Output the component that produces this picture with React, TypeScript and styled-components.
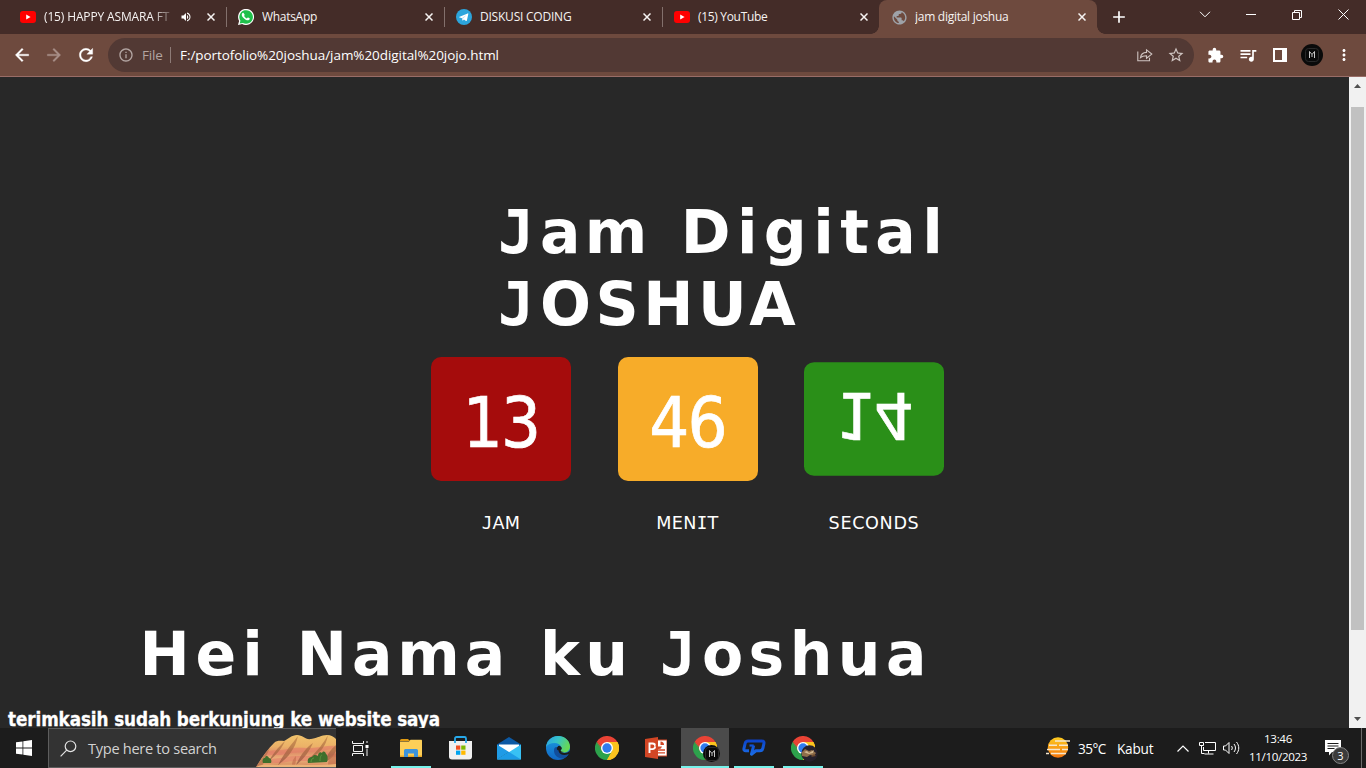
import React from 'react';
import styled, { createGlobalStyle, css } from 'styled-components';
import {
  MdArrowBack, MdArrowForward, MdRefresh, MdExtension, MdQueueMusic,
  MdAdd, MdMoreVert, MdStarBorder, MdInfoOutline, MdPublic, MdVolumeUp,
} from 'react-icons/md';

const Global = createGlobalStyle`
  * { box-sizing: border-box; }
  body { margin: 0; background: #282828; overflow: hidden; }
  svg { display: block; flex: none; }
`;

const ui = css`font-family: "Open Sans", "Noto Sans", sans-serif;`;
const verdana = css`font-family: "DejaVu Sans", sans-serif;`;
const condensed = css`font-family: "DejaVu Sans Condensed", "DejaVu Sans", sans-serif; font-stretch: condensed;`;

const Screen = styled.div`
  width: 1366px; height: 768px; display: flex; flex-direction: column;
  overflow: hidden; color: #fff; ${ui}
`;

/* ---------- tab strip ---------- */
const TabStrip = styled.div`
  height: 34px; flex: none; background: #442c28; display: flex; padding-left: 8px;
`;
const Tab = styled.div<{ $w?: number; $line?: boolean }>`
  width: ${p => p.$w ?? 218}px; height: 34px; display: flex; align-items: center;
  padding: 0 11px 0 12px; position: relative;
  &::after {
    content: ''; display: ${p => (p.$line ? 'block' : 'none')};
    position: absolute; right: -1px; top: 7px; width: 1px; height: 20px; background: #83706c;
  }
`;
const ActiveTab = styled(Tab)`
  background: #6e4a3e; border-radius: 8px 8px 0 0;
  &::before, &::after {
    content: ''; display: block; position: absolute; width: 8px; height: 8px; bottom: 0; top: auto;
  }
  &::before { left: -8px; background: radial-gradient(circle at 0 0, transparent 7.5px, #6e4a3e 8px); }
  &::after { right: -8px; background: radial-gradient(circle at 100% 0, transparent 7.5px, #6e4a3e 8px); }
`;
const Favicon = styled.span`width: 16px; height: 16px; flex: none; display: flex; align-items: center; justify-content: center;`;
const TabTitle = styled.span<{ $ls?: number; $fade?: boolean }>`
  margin-left: 8px; flex: 1; font-size: 12px; line-height: 18px; white-space: nowrap; overflow: hidden;
  letter-spacing: ${p => p.$ls ?? 0}px; color: #f6f3f2;
  ${p => p.$fade && css`
    flex: 0 0 127px;
    mask-image: linear-gradient(90deg, #000 108px, transparent 132px);
  `}
`;
const CloseBox = styled.span`margin-left: auto;`;
const Speaker = styled(MdVolumeUp)`margin-left: 9px;`;
const NewTab = styled.div`width: 44px; display: flex; align-items: center; justify-content: center;`;
const WindowControls = styled.div`
  margin-left: auto; display: flex; height: 29px;
  span { width: 46px; display: flex; align-items: center; justify-content: center; }
`;

/* ---------- toolbar ---------- */
const Toolbar = styled.div`
  height: 43px; flex: none; background: #6e4a3e; border-bottom: 1px solid #996d67;
  display: flex; align-items: center; padding: 0 12px; font-size: 13.5px;
`;
const NavButtons = styled.div`
  display: flex; gap: 12px; width: 96px;
  svg { stroke: currentColor; stroke-width: .4; }
  svg path[fill="none"] { stroke: none; }
  svg:nth-child(2) { color: #a88f88; }
`;
const AddressBar = styled.div`
  width: 1086px; height: 34px; margin-top: -1px; border-radius: 17px; background: #523934;
  display: flex; align-items: center; padding: 0 9px 0 10px; line-height: 18px;
`;
const Scheme = styled.span`margin-left: 8px; color: #b3a5a2; width: 28px; letter-spacing: -0.2px;`;
const Divider = styled.span`width: 1px; height: 16px; background: #8d7b77; margin-right: 9px;`;
const Url = styled.span`letter-spacing: -0.06px;`;
const BarActions = styled.div`margin-left: auto; display: flex; align-items: center; gap: 14px; color: #cfc4c1;`;
const ToolActions = styled.div`display: flex; align-items: center; margin-left: 13px;`;
const Slot = styled.span<{ $w: number }>`width: ${p => p.$w}px; display: flex; align-items: center; justify-content: flex-start;`;
const Avatar = styled.span<{ $size?: number }>`
  width: ${p => p.$size ?? 22}px; height: ${p => p.$size ?? 22}px; border-radius: 50%; background: #0a0a0a;
  display: flex; align-items: center; justify-content: center;
`;

/* ---------- page ---------- */
const Viewport = styled.div`height: 651px; flex: none; display: flex; background: #282828;`;
const Page = styled.main`flex: 1; overflow: hidden; padding-top: 119px; ${verdana}`;
const Heading = styled.h1<{ $left: number; $top?: number }>`
  margin: ${p => p.$top ?? 0}px 0 0 ${p => p.$left}px; font-size: 60px; line-height: 72px;
  font-weight: 700; white-space: nowrap;
`;
const Line = styled.div`display: flex; height: 72px;`;
const Word = styled.span<{ $ls: number; $w: number }>`width: ${p => p.$w}px; flex: none; letter-spacing: ${p => p.$ls}px;`;
const Initial = styled.span`width: 42px; flex: none; font-family: "DejaVu Sans Mono", monospace;`;
const Clock = styled.div`display: flex; gap: 46.5px; margin: 17px 0 0 431px;`;
const Unit = styled.div`width: 140px;`;
const Card = styled.div<{ $bg: string; $flip?: boolean }>`
  height: 124px; border-radius: 10px; background: ${p => p.$bg}; text-align: center;
  padding-top: 4px; line-height: 124px; font-size: 70px; letter-spacing: -1.9px; ${condensed}
  -webkit-text-stroke: .7px #fff;
  ${p => p.$flip && css`transform: scaleY(-0.915);`}
`;
const Caption = styled.div<{ $ls: number }>`
  margin-top: 30px; text-align: center; font-size: 17.6px; line-height: 24px; height: 24px; letter-spacing: ${p => p.$ls}px;
  b { font: 400 17.6px/24px "DejaVu Sans Mono", monospace; }
`;
const Thanks = styled.h3`
  margin: 18px 0 0 8px; font-size: 18.7px; line-height: 24px; font-weight: 700; letter-spacing: -0.09px; white-space: nowrap;
  ${condensed} -webkit-text-stroke: .3px #fff;
`;
const Scrollbar = styled.div`
  width: 17px; background: #f1f1f1; display: flex; flex-direction: column; align-items: center; justify-content: space-between; padding: 7px 0;
`;
const Thumb = styled.div`width: 13px; height: 523px; background: #c1c1c1; margin-bottom: 69px;`;

/* ---------- taskbar ---------- */
const Taskbar = styled.div`height: 40px; flex: none; background: #1c1c1c; display: flex;`;
const Cell = styled.div<{ $active?: boolean; $run?: boolean }>`
  width: 48px; margin-right: 1px; display: flex; align-items: center; justify-content: center;
  background: ${p => (p.$active ? '#4b4b4b' : 'transparent')}; position: relative;
  &::after {
    content: ''; display: ${p => (p.$run || p.$active ? 'block' : 'none')}; position: absolute; bottom: 0;
    left: ${p => (p.$active ? 0 : 4)}px; right: ${p => (p.$active ? 0 : 4)}px; height: 2px; background: #76f2ea;
  }
`;
const Start = styled(Cell)`margin: 0;`;
const TaskView = styled(Cell)`margin-right: 3px;`;
const Search = styled.div`
  width: 288px; background: #333; border: 1px solid #5d5d5d; border-right: 0; display: flex;
  align-items: center; padding-left: 11px; font-size: 14.6px; letter-spacing: -0.3px; color: #d2d2d2; overflow: hidden;
`;
const SearchText = styled.span`margin-left: 11px; margin-right: auto; white-space: nowrap;`;
const Tray = styled.div`margin-left: auto; display: flex; align-items: center; font-size: 13.6px;`;
const Temp = styled.span`margin-left: 8px; width: 39px; letter-spacing: -0.5px;`;
const Weather = styled.span`width: 60px; letter-spacing: -0.2px;`;
const TrayIcon = styled.span<{ $gap: number }>`margin-left: ${p => p.$gap}px;`;
const DateTime = styled.div`
  width: 66px; margin-left: 5px; text-align: center; font-size: 11.6px; line-height: 18px; letter-spacing: -0.35px;
  white-space: nowrap; padding-bottom: 1px;
`;
const Notice = styled.div`width: 31px; height: 40px; position: relative; margin-left: 14px; padding-top: 12px;`;
const Badge = styled.span`
  position: absolute; left: 7px; top: 19px; width: 17px; height: 17px; border-radius: 50%; background: #3b3b3b;
  border: 1px solid #858585; font-size: 11px; line-height: 15px; text-align: center;
`;
const ShowDesktop = styled.div`width: 5px; height: 40px; border-left: 1px solid #6b6b6b; margin-left: 5px;`;

const YouTube = () => (
  <svg width="16" height="12" viewBox="0 0 16 12"><rect width="16" height="12" rx="3" fill="#f00" /><path d="M6.2 3.5v5L10.6 6z" fill="#fff" /></svg>
);
const WhatsApp = () => (
  <svg width="16" height="16" viewBox="0 0 16 16">
    <path d="M0 16l1.1-4.1A8 8 0 1 1 4.1 14.9z" fill="#fff" />
    <path d="M1.7 14.4l.7-2.7A6.8 6.8 0 1 1 4.9 14z" fill="#1fc04b" />
    <path d="M5.6 4.1c-.3-.6-1-.5-1.4.1-1.100 1.500-.1 3.300 1.400 4.800s3.300 2.600 4.700 2.300c1-.2 1.600-1 1.500-1.700-.1-.4-1.700-1.200-2-1.100-.4.2-.7 1-1 .9-1-.3-2.200-1.400-2.600-2.300-.2-.4.6-.8.5-1.300z" fill="#fff" />
  </svg>
);
const Telegram = () => (
  <svg width="16" height="16" viewBox="0 0 16 16"><circle cx="8" cy="8" r="8" fill="#2ca5dc" />
    <path d="M3 7.900l8.700-3.500c.5-.2.7.1.6.6l-1.400 6.600c-.1.500-.5.600-.9.300L7.900 10.400l-1 1c-.2.2-.5.1-.5-.2l-.4-2-2.900-.9z" fill="#fff" />
    <path d="M6 9.100l4.500-3-3.600 3.600-.4 1.500z" fill="#b8dcf0" /></svg>
);
const Monogram = () => (
  <svg width="22" height="22" viewBox="0 0 22 22" fill="none">
    <rect x="4.500" y="4.500" width="13" height="13" rx="3" stroke="#2a2a2a" />
    <path d="M8.500 14V7.500l2.500 3 2.500-3V14M11 10.500V13" stroke="#c8c8c8" strokeWidth="1" />
  </svg>
);
const Share = () => (
  <svg width="16" height="16" viewBox="0 0 16 16" fill="none" stroke="currentColor" strokeWidth="1.100">
    <path d="M.8 4.500v9.300h11.700v-3" /><path d="M3.500 10.500c.5-3.600 2.800-5 6-5.100V2.800l5.300 4.300-5.300 4.200V8.700c-2.500 0-4.500.4-6 1.800z" />
  </svg>
);
const SidePanel = () => (<svg width="14" height="14" viewBox="0 0 14 14"><path d="M0 0h14v14H0zM2 2v10h7V2z" fill="#fff" fillRule="evenodd" /></svg>);

const Chrome = () => (
  <svg width="24" height="24" viewBox="0 0 48 48">
    <path d="M24 24L3.200 12A24 24 0 0 1 44.800 12z" fill="#e94335" />
    <path d="M24 24L44.800 12A24 24 0 0 1 24 48z" fill="#fcc31e" />
    <path d="M24 24L24 48A24 24 0 0 1 3.200 12z" fill="#2da24c" />
    <path d="M24 12h20.800L34 20zM13.600 30L3.200 12l15 6z" fill="#e94335" />
    <path d="M13.600 30L3.200 12l10.400 12z" fill="#2da24c" />
    <path d="M34.400 30L24 48l-1-14z" fill="#2da24c" />
    <path d="M34.400 30L24 48A24 24 0 0 0 44.800 12H24z" fill="#fcc31e" />
    <circle cx="24" cy="24" r="12" fill="#fff" /><circle cx="24" cy="24" r="9.300" fill="#2f7bee" />
  </svg>
);
const Overlay = styled.span`position: absolute; left: 22px; top: 17px;`;

const Explorer = () => (
  <svg width="22" height="19" viewBox="0 0 22 19"><path d="M0 1.500A1.500 1.500 0 0 1 1.500 0H8l2 2H0z" fill="#e19b12" /><path d="M0 2.500h9l1.500-1.800H21c.6 0 1 .4 1 1V17H0z" fill="#fdcf58" />
    <path d="M0 16.500h22V18H0z" fill="#e8a827" /><path d="M4 18v-6.500A1.500 1.500 0 0 1 5.500 10h11a1.500 1.500 0 0 1 1.500 1.500V18h-4v-3.500H8V18z" fill="#3c94dc" /></svg>
);
const Store = () => (
  <svg width="23" height="24" viewBox="0 0 23 24">
    <path d="M0 5h23v15.500a3 3 0 0 1-3 3H3a3 3 0 0 1-3-3z" fill="#f0f0f0" /><path d="M6 7V2.500A1.500 1.500 0 0 1 7.500 1h8A1.500 1.500 0 0 1 17 2.500V7" fill="none" stroke="#27a9ea" strokeWidth="1.800" />
    <path d="M7 9.500h4.300v4.200H7z" fill="#f25022" /><path d="M12.200 9.500h4.300v4.200h-4.300z" fill="#7fba00" /><path d="M7 14.600h4.300v4.200H7z" fill="#00a4ef" /><path d="M12.200 14.600h4.300v4.200h-4.300z" fill="#ffb900" /></svg>
);
const Mail = () => (
  <svg width="24" height="23" viewBox="0 0 24 23"><path d="M0 7.500L12 0l12 7.500V14H0z" fill="#0c59a4" /><path d="M2 7.500h20V15H2z" fill="#fff" />
    <path d="M0 7.500l12 7.500L0 22.500z" fill="#1f9be6" /><path d="M24 7.500L0 22.500h24z" fill="#38c1f4" /><path d="M0 22.500L12 15l12 7.500z" fill="#1d9be6" /></svg>
);
const Edge = () => (
  <svg width="24" height="24" viewBox="0 0 24 24">
    <defs>
      <linearGradient id="eg" x1="0" x2="1" y1="0" y2=".4"><stop offset="0" stopColor="#2a9fe8" /><stop offset=".5" stopColor="#36c3c9" /><stop offset="1" stopColor="#65d857" /></linearGradient>
      <linearGradient id="eb" x1="0" x2="0" y1="0" y2="1"><stop offset="0" stopColor="#1b9de2" /><stop offset="1" stopColor="#1166c4" /></linearGradient>
    </defs>
    <circle cx="12" cy="12" r="12" fill="url(#eb)" />
    <path d="M0 11C1 4 6 0 12 0c7 0 12 5 12 10.500 0 4-3 6-6 6-2.500 0-4-1-3.500-2 1-1 1-2 .8-3C14.500 8.500 12 7 8.500 7 5 7 1.500 8.500 0 11z" fill="url(#eg)" />
    <path d="M8.500 12c-2 5 2 11 9 10.500 2-.8 4-2.500 5.300-4.500-5 2-10 0-10.300-4 0-1.500 1-2 1-2-2-1.500-4.200-1.200-5 0z" fill="#124e9b" />
    <path d="M24 14.500c-2 2.500-6 3-8.500 2-1.500-.6-1.300-1.500-.8-2.200-.8.500-2 .8-2.200.2.500 4 5 6 10.500 3.500z" fill="#1c1c1c" />
    <path d="M12.500 14.500a2.300 2.300 0 1 1 2.300-.4c-.8.800.4 2 3.200 2-2.500 1-5 .4-5.500-1.600z" fill="#1c1c1c" />
  </svg>
);
const PowerPoint = () => (
  <svg width="22" height="22" viewBox="0 0 22 22"><path d="M12 3h10v16H12z" fill="#fff" stroke="#d24625" /><path d="M0 2L13 0v22L0 20z" fill="#d24625" />
    <path d="M4.500 16V6.500h3a2.600 2.600 0 0 1 0 5.600h-3" fill="none" stroke="#fff" strokeWidth="1.900" /><path d="M13 13h7M13 15.800h7" stroke="#d24625" strokeWidth="1.300" /><path d="M13 5.500a3.300 3.300 0 1 0 4 4h-4z" fill="#d24625" /><path d="M15.500 4.500v3.500H19A3.500 3.500 0 0 0 15.500 4.500z" fill="#d24625" /></svg>
);
const BlueP = () => (
  <svg width="24" height="18" viewBox="0 0 24 18" fill="none" stroke="url(#bp)" strokeWidth="3" strokeLinejoin="round">
    <defs><linearGradient id="bp" gradientUnits="userSpaceOnUse" x1="0" x2="0" y1="0" y2="17"><stop offset="0" stopColor="#0b3fc4" /><stop offset="1" stopColor="#1b70ea" /></linearGradient></defs>
    <path d="M7 11.800H3.800C2.300 11.800 1.600 11 2 9.300L3.100 4.500C3.500 2.800 4.500 2 6.100 2H19.900c1.700 0 2.400 1 2 2.700l-1 4.500c-.4 1.700-1.400 2.600-3 2.600h-4L9.500 15.200l2.200-8.700" />
    <path d="M7.500 6.500h4.200" strokeWidth="2.200" /></svg>
);
const PhotoBadge = () => (
  <svg width="17" height="17" viewBox="0 0 17 17"><circle cx="8.500" cy="8.500" r="8.200" fill="#26202c" /><path d="M1 7l3-3 4 2 3-1 4 3-2 3-4-1-3 2-5-1z" fill="#8f6d4a" /><path d="M3 7l3-1 2 2 5-3-1 3-4 1-3-1z" fill="#d2b78f" /><path d="M10 12l3-3 2 2z" fill="#6c492d" /></svg>
);
const Hills = () => (
  <svg width="80" height="32" viewBox="0 0 80 32">
    <defs>
      <linearGradient id="hill" x1="0" x2="0" y1="0" y2="1"><stop offset="0" stopColor="#f0c36c" /><stop offset=".35" stopColor="#ecb268" /><stop offset=".55" stopColor="#e08f68" /><stop offset=".75" stopColor="#edb37a" /><stop offset="1" stopColor="#d3855c" /></linearGradient>
      <linearGradient id="fold" x1="0" x2="0" y1="0" y2="1"><stop offset="0" stopColor="#c08246" /><stop offset="1" stopColor="#8f4e3c" /></linearGradient>
      <clipPath id="ridge"><path d="M0 32C6 22 12 14 18 8c3-3 7-2 10-2 4-2 8-6 13-6 6 0 8 5 14 4 7-1 10-4 16-4 4 0 7 2 9 4v28z" /></clipPath>
    </defs>
    <g clipPath="url(#ridge)">
      <path d="M0 0h80v32H0z" fill="url(#hill)" />
      <path d="M10 17c8-3 14-1 22-3s16-1 24-1 16-3 24-2v3c-9 0-15 3-24 3s-17 0-25 2-14 0-23 2zM6 25c10-2 16-1 24-3s22 0 30-2 14-2 20-1v3c-8-1-14 1-22 3s-20 0-28 2-16 0-26 1z" fill="#e27c69" opacity=".6" />
      <path d="M29 6c-5 5-10 9-16 20 6-5 12-11 16-20zM42 1c-6 8-12 14-20 29 10-7 17-16 20-29zM57 8c-7 5-12 11-17 22 8-6 13-13 17-22zM72 0c-5 9-10 15-18 23 10-4 16-12 18-23zM80 10c-6 5-9 10-11 17 5-2 9-6 11-11z" fill="url(#fold)" opacity=".7" />
      <path d="M0 32C5 24 9 18 14 13c-3 6-5 11-8 19z" fill="#b3704a" opacity=".7" />
      <path d="M36 30c0-4 2-7 4-9 0 4 0 6-1 9zM72 30c0-6 3-9 8-12v12z" fill="#c4704f" opacity=".7" />
      <path d="M0 32c8-4 14-2 20-2 15-1 40 1 60-1v3z" fill="#edb477" />
      <path d="M7 28c-1-3 0-5 2-5 1-3 3-2 4 0 2 0 3 3 2 5zM52 28c-1-4 1-6 4-6 2-3 4-2 6-1 0-3 2-5 4-3 1-2 3-2 4 1 2 1 2 6 1 8z" fill="#3f6f2c" />
      <path d="M55 27c0-3 2-4 3-4M64 26c0-4 1-6 2-6" stroke="#5f9440" fill="none" />
    </g>
  </svg>
);
const Haze = () => (
  <svg width="24" height="22" viewBox="0 0 24 22"><defs><linearGradient id="sun" x1="0" x2="0" y1="0" y2="1"><stop offset="0" stopColor="#fdcb20" /><stop offset="1" stopColor="#f4740b" /></linearGradient></defs>
    <circle cx="12" cy="10.500" r="10.200" fill="url(#sun)" /><path d="M9 4h15M3 8.200h8M13 8.200h9M1 12.400h13M16 12.400h6M0 16.600h3M5 16.600h15" stroke="#f5e7cf" strokeWidth="1.500" /></svg>
);

const Close = () => (
  <CloseBox><svg width="8" height="8" viewBox="0 0 8 8" fill="none" stroke="#f6f3f2" strokeWidth="1.500"><path d="M.5.5l7 7M7.500.5l-7 7" /></svg></CloseBox>
);

export default function App() {
  return (
    <Screen>
      <Global />
      <TabStrip>
        <Tab $line><Favicon><YouTube /></Favicon><TabTitle $fade $ls={-0.14}>(15) HAPPY ASMARA FT</TabTitle>
          <Speaker size={12} /><Close /></Tab>
        <Tab $line><Favicon><WhatsApp /></Favicon><TabTitle $ls={-0.3}>WhatsApp</TabTitle><Close /></Tab>
        <Tab $line><Favicon><Telegram /></Favicon><TabTitle $ls={-0.22}>DISKUSI CODING</TabTitle><Close /></Tab>
        <Tab $w={217}><Favicon><YouTube /></Favicon><TabTitle $ls={-0.32}>(15) YouTube</TabTitle><Close /></Tab>
        <ActiveTab><Favicon><MdPublic size={17} color="#9ea2a8" /></Favicon><TabTitle $ls={-0.27}>jam digital joshua</TabTitle><Close /></ActiveTab>
        <NewTab><MdAdd size={20} /></NewTab>
        <WindowControls>
          <span><svg width="12" height="7" viewBox="0 0 12 7" fill="none" stroke="#fff"><path d="M1 .8l5 5 5-5" /></svg></span>
          <span><svg width="10" height="1"><path d="M0 0h10v1H0z" fill="#fff" /></svg></span>
          <span><svg width="10" height="10" viewBox="0 0 10 10" fill="none" stroke="#fff"><path d="M.5 2.500h7v7h-7zM2.500 2.500v-2h7v7h-2" /></svg></span>
          <span><svg width="11" height="11" viewBox="0 0 11 11" stroke="#fff"><path d="M.5.5l10 10M10.500.5l-10 10" /></svg></span>
        </WindowControls>
      </TabStrip>
      <Toolbar>
        <NavButtons><MdArrowBack size={20} /><MdArrowForward size={20} /><MdRefresh size={20} /></NavButtons>
        <AddressBar>
          <MdInfoOutline size={16} color="#b3a5a2" />
          <Scheme>File</Scheme><Divider /><Url>F:/portofolio%20joshua/jam%20digital%20jojo.html</Url>
          <BarActions><Share /><MdStarBorder size={18} /></BarActions>
        </AddressBar>
        <ToolActions>
          <Slot $w={31}><MdExtension size={17} /></Slot>
          <Slot $w={35}><MdQueueMusic size={20} /></Slot>
          <Slot $w={28}><SidePanel /></Slot>
          <Slot $w={34}><Avatar><Monogram /></Avatar></Slot>
          <MdMoreVert size={18} />
        </ToolActions>
      </Toolbar>
      <Viewport>
        <Page>
          <Heading $left={498}>
            <Line><Initial>J</Initial><Word $ls={4.2} $w={140.7}>am</Word><Word $ls={6.4} $w={280}>Digital</Word></Line>
            <Line><Initial>J</Initial><Word $ls={4.5} $w={400}>OSHUA</Word></Line>
          </Heading>
          <Clock>
            <Unit><Card $bg="#a50c0c">13</Card><Caption $ls={0.2}><b>J</b>AM</Caption></Unit>
            <Unit><Card $bg="#f7ac29">46</Card><Caption $ls={0.3}>MEN<b>I</b>T</Caption></Unit>
            <Unit><Card $bg="#2a8f18" $flip>14</Card><Caption $ls={0.65}>SECONDS</Caption></Unit>
          </Clock>
          <Heading $left={139.5} $top={83}>
            <Line>
              <Word $ls={5.9} $w={157.3}>Hei</Word><Word $ls={4.9} $w={243.2}>Nama</Word>
              <Word $ls={5.4} $w={120}>ku</Word><Initial>J</Initial><Word $ls={5.4} $w={260}>oshua</Word>
            </Line>
          </Heading>
          <Thanks>terimkasih sudah berkunjung ke website saya</Thanks>
        </Page>
        <Scrollbar>
          <svg width="7" height="4" viewBox="0 0 7 4"><path d="M0 4l3.500-4L7 4z" fill="#505050" /></svg>
          <Thumb />
          <svg width="7" height="4" viewBox="0 0 7 4"><path d="M0 0l3.500 4L7 0z" fill="#505050" /></svg>
        </Scrollbar>
      </Viewport>
      <Taskbar>
        <Start><svg width="16" height="16" viewBox="0 0 16 16" fill="#fff"><path d="M0 2.300l6.500-.9v6.100H0zM7.300 1.300L16 0v7.500H7.300zM0 8.400h6.500v6.200L0 13.700zM7.300 8.400H16V16l-8.700-1.200z" /></svg></Start>
        <Search>
          <svg width="17" height="17" viewBox="0 0 17 17" fill="none" stroke="#e3e3e3" strokeWidth="1.200"><circle cx="10.500" cy="6.300" r="5.300" /><path d="M6.700 10.200L.6 16.300" /></svg>
          <SearchText>Type here to search</SearchText>
          <TrayIcon $gap={0} style={{ alignSelf: 'flex-end' }}><Hills /></TrayIcon>
        </Search>
        <TaskView><svg width="17" height="17" viewBox="0 0 17 17" fill="none" stroke="#f2f2f2"><path d="M.5 1v2.500h11V1M.5 16v-2.500h11V16M1.500 5.500h9v6h-9zM15 1v2M15 8.500V16" /><path d="M13.500 5h3v3h-3z" fill="#fff" stroke="none" /></svg></TaskView>
        <Cell $run><Explorer /></Cell>
        <Cell><Store /></Cell>
        <Cell><Mail /></Cell>
        <Cell><Edge /></Cell>
        <Cell><Chrome /></Cell>
        <Cell><PowerPoint /></Cell>
        <Cell $active><Chrome /><Overlay><Avatar $size={17}><Monogram /></Avatar></Overlay></Cell>
        <Cell $run><BlueP /></Cell>
        <Cell $run><Chrome /><Overlay><PhotoBadge /></Overlay></Cell>
        <Tray>
          <Haze /><Temp>35°C</Temp><Weather>Kabut</Weather>
          <svg width="12" height="7" viewBox="0 0 12 7" fill="none" stroke="#fff" strokeWidth="1.200"><path d="M.5 6.500L6 1l5.500 5.500" /></svg>
          <TrayIcon $gap={10}><svg width="17" height="15" viewBox="0 0 17 15" fill="none" stroke="#fff"><path d="M6 1.500h10.500v8H4.500V6M9.500 9.500v3M5.500 13h9M.5 1.500h4v3h-4zM2.500 5v7.500h3" /></svg></TrayIcon>
          <TrayIcon $gap={7}><svg width="17" height="14" viewBox="0 0 17 14" fill="none" stroke="#fff"><path d="M.5 5v4h2L6 12.500v-11L2.500 5zM8.500 5c1 1.300 1 2.700 0 4M11 3c2 2.500 2 5.500 0 8M13.500 1c3 3.800 3 8.200 0 12" /></svg></TrayIcon>
          <DateTime>13:46<br />11/10/2023</DateTime>
          <Notice><svg width="16" height="16" viewBox="0 0 16 16"><path d="M0 0h16v12H7l-3 3.500V12H0z" fill="#fff" /><path d="M2.500 3.500h11M2.500 6h11M2.500 8.500h7" stroke="#1c1c1c" /></svg><Badge>3</Badge></Notice>
          <ShowDesktop />
        </Tray>
      </Taskbar>
    </Screen>
  );
}
